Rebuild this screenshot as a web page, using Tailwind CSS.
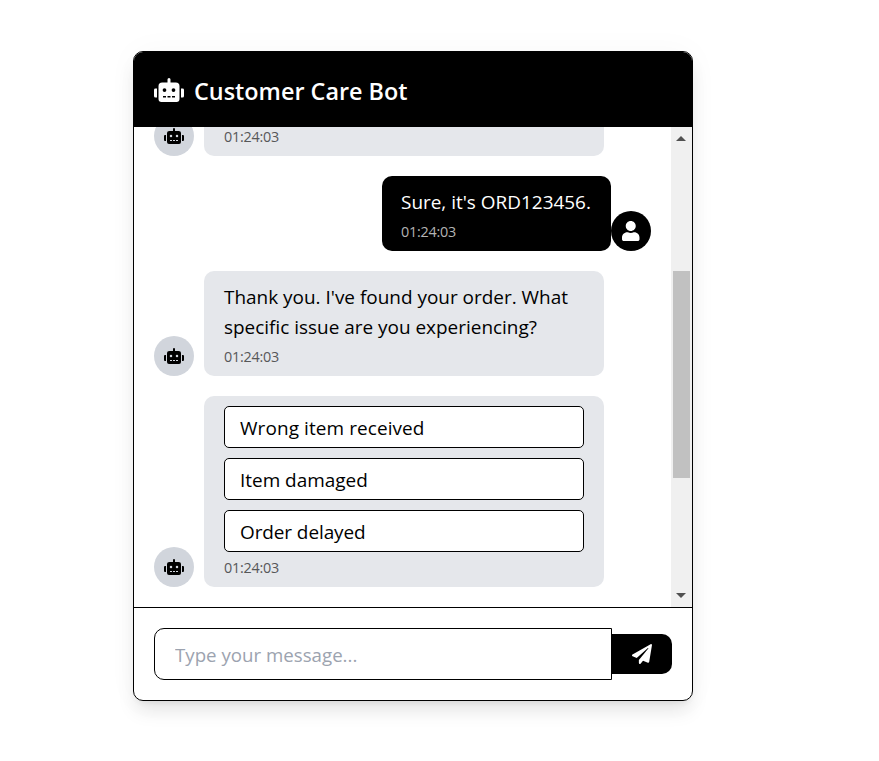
<!DOCTYPE html>
<html lang="en">
<head>
<meta charset="utf-8">
<title>Customer Care Bot</title>
<script src="https://cdn.jsdelivr.net/npm/@tailwindcss/browser@4"></script>
</head>
<body class="h-[761px] overflow-hidden bg-white pl-[133px] pt-[51px] font-['Open_Sans',sans-serif] text-black">
<svg class="hidden">
  <symbol id="robot" viewBox="0 0 640 512"><path d="M32,224H64V416H32A31.96166,31.96166,0,0,1,0,384V256A31.96166,31.96166,0,0,1,32,224Zm512-48V448a64.06328,64.06328,0,0,1-64,64H160a64.06328,64.06328,0,0,1-64-64V176a79.974,79.974,0,0,1,80-80H288V32a32,32,0,0,1,64,0V96H464A79.974,79.974,0,0,1,544,176ZM264,256a40,40,0,1,0-40,40A39.997,39.997,0,0,0,264,256Zm-8,128H192v32h64Zm96,0H288v32h64ZM456,256a40,40,0,1,0-40,40A39.997,39.997,0,0,0,456,256Zm-8,128H384v32h64ZM640,256V384a31.96166,31.96166,0,0,1-32,32H576V224h32A31.96166,31.96166,0,0,1,640,256Z"/></symbol>
</svg>
<main class="flex h-[650px] w-[560px] flex-col overflow-hidden rounded-[10px] border border-black bg-white shadow-[0_12.5px_18.75px_-3.75px_rgba(0,0,0,0.1),0_5px_7.5px_-5px_rgba(0,0,0,0.1),0_0_32px_rgba(0,0,0,0.03)]">
  <header class="flex h-[75px] shrink-0 items-center bg-black px-5 pt-[3px] text-white">
    <svg class="mb-[2px] h-6 w-[30px] fill-white"><use href="#robot"/></svg>
    <h1 class="ml-[10px] whitespace-nowrap text-[23.4px] font-semibold leading-[35px]">Customer Care Bot</h1>
  </header>
  <div class="flex h-[480px] shrink-0">
    <section class="flex flex-1 flex-col justify-end gap-5 overflow-hidden px-5 pb-5 text-[18.95px] leading-[30px]">
      <div class="flex items-end gap-[10px]">
        <span class="flex size-10 shrink-0 items-center justify-center rounded-full bg-gray-300"><svg class="h-4 w-5 fill-black"><use href="#robot"/></svg></span>
        <div class="flex h-[75px] w-[400px] items-end rounded-[10px] bg-[#e5e7eb] px-5 pb-[10px]">
          <time class="block text-[14.4px] leading-[18px] tracking-[-0.25px] text-[#575759]">01:24:03</time>
        </div>
      </div>
      <div class="flex items-end justify-end">
        <div class="h-[75px] w-[229px] rounded-[10px] bg-black px-[19px] py-[11px] text-white">
          <p class="whitespace-nowrap">Sure, it's ORD123456.</p>
          <time class="block pt-[6px] text-[14.4px] leading-[18px] tracking-[-0.25px] text-[#b3b3b3]">01:24:03</time>
        </div>
        <span class="flex size-10 shrink-0 items-center justify-center rounded-full bg-black"><svg class="h-5 w-[17.5px] fill-white" viewBox="0 0 448 512"><path d="M224 256c70.7 0 128-57.3 128-128S294.7 0 224 0 96 57.3 96 128s57.3 128 128 128zm89.6 32h-16.7c-22.2 10.2-46.9 16-72.9 16s-50.6-5.8-72.9-16h-16.7C60.2 288 0 348.2 0 422.4V464c0 26.5 21.5 48 48 48h352c26.5 0 48-21.5 48-48v-41.6c0-74.2-60.2-134.4-134.4-134.4z"/></svg></span>
      </div>
      <div class="flex items-end gap-[10px]">
        <span class="flex size-10 shrink-0 items-center justify-center rounded-full bg-gray-300"><svg class="h-4 w-5 fill-black"><use href="#robot"/></svg></span>
        <div class="h-[105px] w-[400px] rounded-[10px] bg-[#e5e7eb] px-5 py-[11px]">
          <p class="whitespace-nowrap">Thank you. I've found your order. What<br>specific issue are you experiencing?</p>
          <time class="block pt-[6px] text-[14.4px] leading-[18px] tracking-[-0.25px] text-[#575759]">01:24:03</time>
        </div>
      </div>
      <div class="flex items-end gap-[10px]">
        <span class="flex size-10 shrink-0 items-center justify-center rounded-full bg-gray-300"><svg class="h-4 w-5 fill-black"><use href="#robot"/></svg></span>
        <div class="h-[191px] w-[400px] rounded-[10px] bg-[#e5e7eb] px-5 py-[10px]">
          <div class="flex flex-col gap-[10px]">
            <button class="h-[42px] w-[360px] rounded-[5px] border border-black bg-white px-[15px] pt-[2px] text-left tracking-[0.1px]">Wrong item received</button>
            <button class="h-[42px] w-[360px] rounded-[5px] border border-black bg-white px-[15px] pt-[2px] text-left">Item damaged</button>
            <button class="h-[42px] w-[360px] rounded-[5px] border border-black bg-white px-[15px] pt-[2px] text-left tracking-[-0.08px]">Order delayed</button>
          </div>
          <time class="block pt-[7px] text-[14.4px] leading-[18px] tracking-[-0.25px] text-[#575759]">01:24:03</time>
        </div>
      </div>
    </section>
    <div class="flex w-[21px] shrink-0 flex-col items-center bg-[#f0f0f0] pt-[9px] pb-[9px]">
      <svg class="mr-px h-[5px] w-[10px] fill-[#505050]" viewBox="0 0 10 5"><path d="M0 5L5 0L10 5Z"/></svg>
      <div class="mt-[130px] h-[207px] w-[17px] bg-[#c1c1c1]"></div>
      <svg class="mr-px mt-auto h-[5px] w-[10px] fill-[#505050]" viewBox="0 0 10 5"><path d="M0 0H10L5 5Z"/></svg>
    </div>
  </div>
  <footer class="flex flex-1 items-center border-t border-black px-5">
    <input class="h-[52px] w-[458px] rounded-l-[10px] border border-black px-5 text-[18.7px] placeholder:text-[#9ca3af]" placeholder="Type your message...">
    <button class="flex h-10 w-[60px] items-center justify-center rounded-r-[10px] bg-black"><svg class="size-5 fill-white" viewBox="0 0 512 512"><path d="M476 3.2L12.5 270.6c-18.1 10.4-15.8 35.6 2.2 43.2L121 358.4l287.3-253.2c5.5-4.9 13.3 2.6 8.6 8.3L176 407v80.5c0 23.6 28.5 32.9 42.5 15.8L282 426l124.6 52.2c14.2 6 30.4-2.9 33-18.2l72-432C515 7.8 493.3-6.8 476 3.2z"/></svg></button>
  </footer>
</main>
</body>
</html>
